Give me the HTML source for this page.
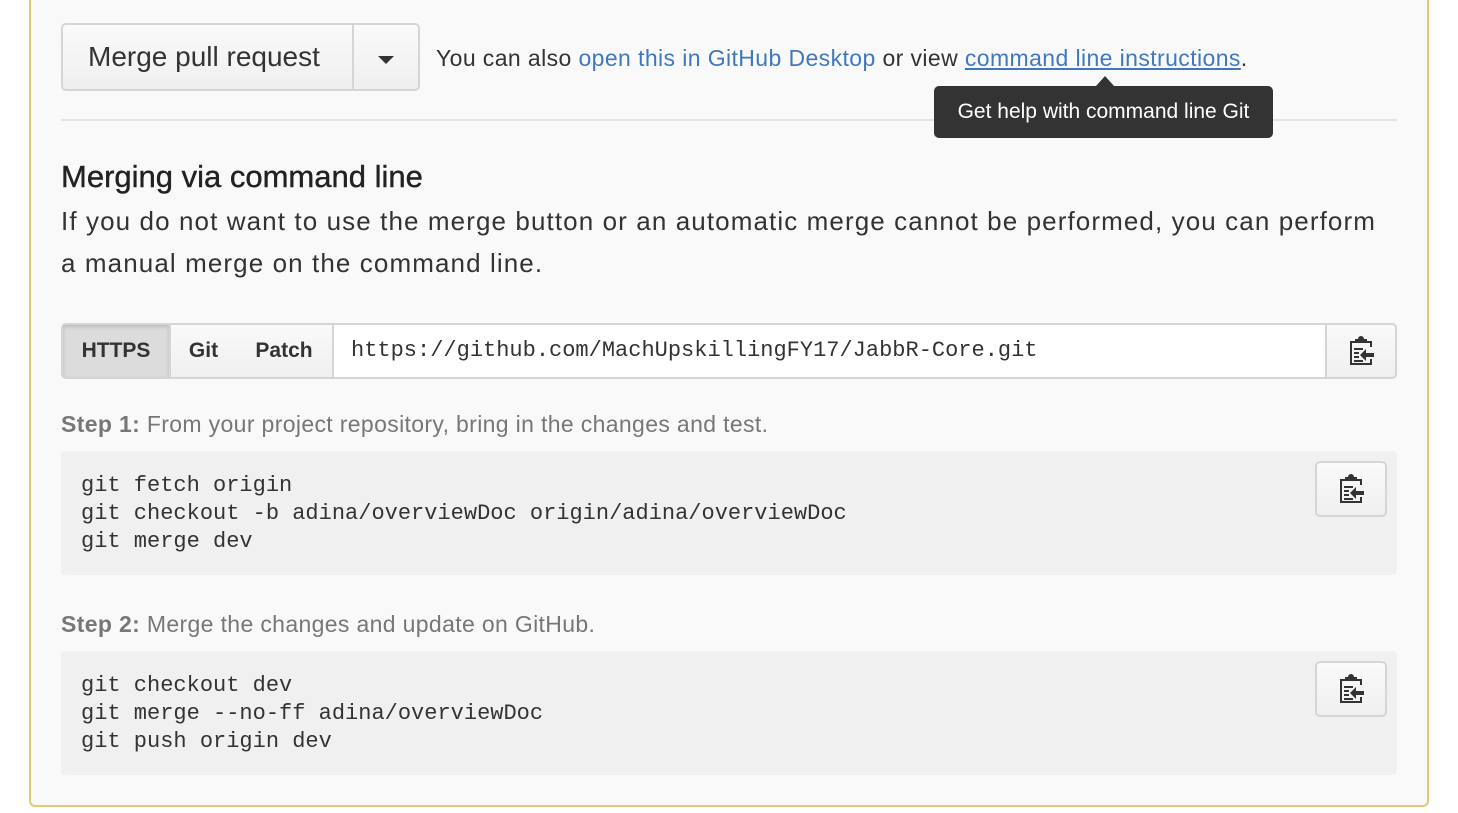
<!DOCTYPE html><html><head><style>
body{margin:0;width:1458px;height:813px;background:#fff;font-family:"Liberation Sans",sans-serif;position:relative;overflow:hidden;color:#333}
.panel{position:absolute;left:29px;top:-5px;width:1396px;height:808px;border:2px solid #e4c872;border-radius:0 0 6px 6px;background:#f9f9f9}
.a{position:absolute}
.btn{background:linear-gradient(#fafafa,#efefef);border:2px solid #d5d5d5;box-sizing:border-box}
.mono{font-family:"Liberation Mono",monospace;font-size:22px;color:#333;line-height:28px}
.code{background:#f0f0f0;border-radius:4px}
.cb{width:72px;height:56px;border-radius:5px;border:2px solid #d5d5d5;background:linear-gradient(#fafafa,#efefef);box-sizing:border-box;display:flex;align-items:center;justify-content:center}
</style></head><body>
<div class="panel"></div>
<div class="a btn" style="left:61px;top:23px;width:359px;height:68px;border-radius:5px"></div>
<div class="a" style="left:352px;top:25px;width:2px;height:64px;background:#d5d5d5"></div>
<div class="a" style="left:88px;top:41px;font-size:28px;color:#333">Merge pull request</div>
<div class="a" style="left:378px;top:56px;width:0;height:0;border-left:8px solid transparent;border-right:8px solid transparent;border-top:8px solid #333"></div>
<div class="a" style="left:436px;top:45px;font-size:23px;letter-spacing:0.4px;color:#333">You can also <span style="color:#4078c0">open this in GitHub Desktop</span> or view <span style="color:#4078c0;text-decoration:underline">command line instructions</span>.</div>
<div class="a" style="left:61px;top:119px;width:1336px;height:2px;background:#e3e3e3"></div>
<div class="a" style="left:934px;top:86px;width:339px;height:52px;background:#333;border-radius:5px;color:#fff;font-size:21px;line-height:52px;text-align:center">Get help with command line Git</div>
<div class="a" style="left:1096px;top:76px;border-left:9px solid transparent;border-right:9px solid transparent;border-bottom:10px solid #333"></div>
<div class="a" style="left:61px;top:159px;font-size:31px;color:#222;-webkit-text-stroke:0.4px #222">Merging via command line</div>
<div class="a" style="left:61px;top:200px;font-size:26px;line-height:42px;letter-spacing:1.1px;color:#333;white-space:nowrap">If you do not want to use the merge button or an automatic merge cannot be performed, you can perform<br>a manual merge on the command line.</div>
<div class="a" style="left:61px;top:323px;width:1336px;height:56px;border:2px solid #d5d5d5;border-radius:5px;box-sizing:border-box;background:#fff"></div>
<div class="a" style="left:63px;top:325px;width:106px;height:52px;background:#dcdcdc;box-shadow:inset 0 2px 4px rgba(0,0,0,.15);font-weight:bold;font-size:21px;line-height:52px;text-align:center">HTTPS</div>
<div class="a btn" style="left:169px;top:325px;width:69px;height:52px;border-width:0 2px;font-weight:bold;font-size:21px;line-height:52px;text-align:center">Git</div>
<div class="a btn" style="left:236px;top:325px;width:98px;height:52px;border-width:0 2px 0 0;font-weight:bold;font-size:21px;line-height:52px;text-align:center">Patch</div>
<div class="a mono" style="left:351px;top:337px">https://github.com/MachUpskillingFY17/JabbR-Core.git</div>
<div class="a btn" style="left:1325px;top:323px;width:72px;height:56px;border-radius:0 5px 5px 0;display:flex;align-items:center;justify-content:center">CLIP</div>
<div class="a" style="left:61px;top:411px;font-size:23px;letter-spacing:0.35px;color:#777"><b>Step 1:</b> From your project repository, bring in the changes and test.</div>
<div class="a code" style="left:61px;top:451px;width:1336px;height:124px"></div>
<div class="a mono" style="left:81px;top:472px">git fetch origin<br>git checkout -b adina/overviewDoc origin/adina/overviewDoc<br>git merge dev</div>
<div class="a cb" style="left:1315px;top:461px">CLIP</div>
<div class="a" style="left:61px;top:611px;font-size:23px;letter-spacing:0.35px;color:#777"><b>Step 2:</b> Merge the changes and update on GitHub.</div>
<div class="a code" style="left:61px;top:651px;width:1336px;height:124px"></div>
<div class="a mono" style="left:81px;top:672px">git checkout dev<br>git merge --no-ff adina/overviewDoc<br>git push origin dev</div>
<div class="a cb" style="left:1315px;top:661px">CLIP</div>
<script>
var svg='<svg width="28" height="30" viewBox="0 0 28 30"><path d="M3 5h5V3h3a3 3 0 0 1 6 0h3v2h5v6h-2V7H5v20h18v-4h2v6H3z" fill="#333"/><rect x="9" y="4" width="10" height="3" fill="#333"/><path d="M7 12h9v2H7zM7 16h5v2H7zM7 20h5v2H7zM7 24h9v2H7z" fill="#333"/><path d="M13 19l6-6v4h8v4h-8v4z" fill="#333"/></svg>';
document.querySelectorAll('.a').forEach(function(e){if(e.textContent==='CLIP')e.innerHTML=svg;});
</script>
</body></html>
